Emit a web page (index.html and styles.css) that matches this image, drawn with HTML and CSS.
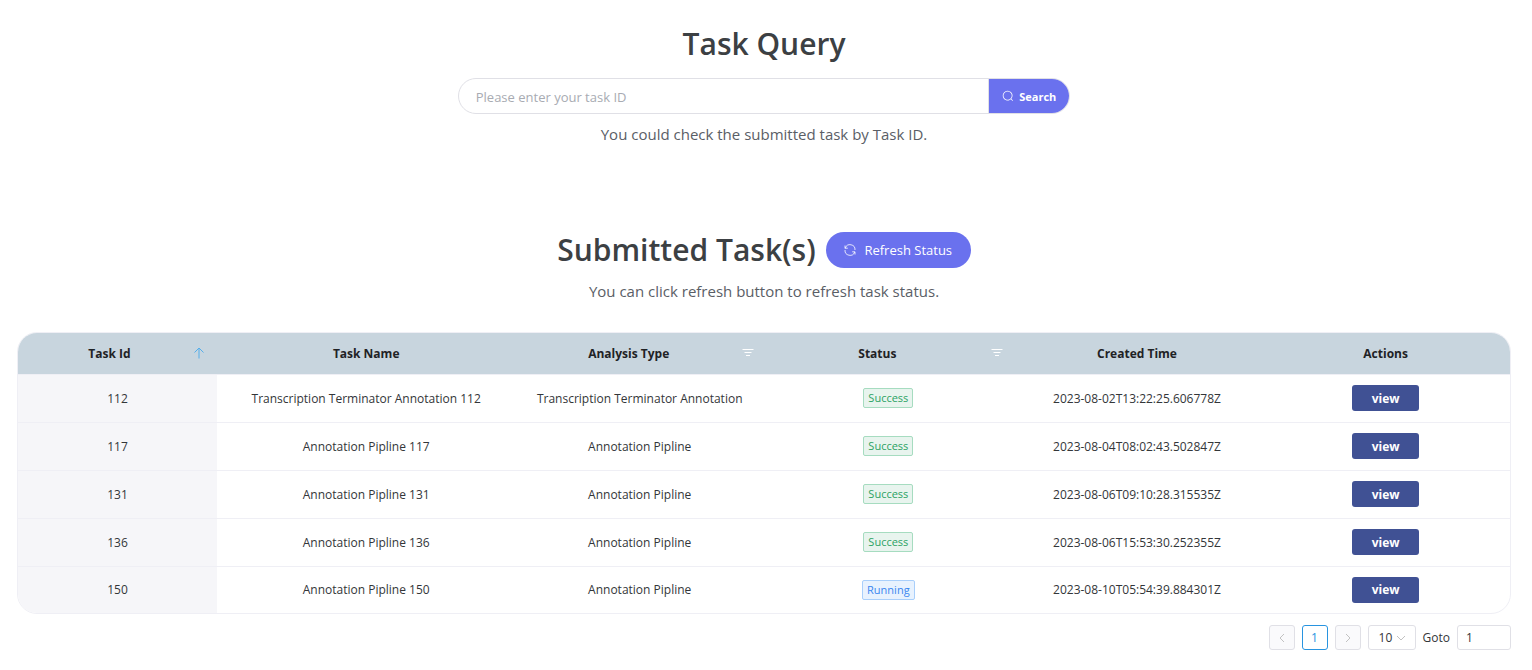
FILE: index.html
```html
<!DOCTYPE html>
<html lang="en">
<head>
<meta charset="utf-8">
<title>Task Query</title>
<link rel="stylesheet" href="styles.css">
</head>
<body>
<main class="page">
  <section class="query">
    <h1 class="title">Task Query</h1>
    <form class="search">
      <input class="search-input" type="text" aria-label="Task ID" placeholder="Please enter your task ID">
      <button class="search-button" type="button">
        <svg class="icon" viewBox="0 0 1024 1024" aria-hidden="true"><path fill="currentColor" d="m795.9 750.7 125 124.9a32 32 0 0 1-45.3 45.3l-125-125a416 416 0 1 1 45.300-45.200zM480 832a352 352 0 1 0 0-704 352 352 0 0 0 0 704z"/></svg>
        <span>Search</span>
      </button>
    </form>
    <p class="hint">You could check the submitted task by Task ID.</p>
  </section>

  <section class="submitted">
    <div class="heading">
      <h2 class="title">Submitted Task(s)</h2>
      <button class="refresh" type="button">
        <svg class="icon refresh-icon" viewBox="0 0 12 12" aria-hidden="true"><path d="M1 4.500V1.500M1 4.200h2.800M1.300 4A5 5 0 0 1 11 6M11 10.500V7.800M11 7.800H8.200M10.700 8A5 5 0 0 1 1 6"/></svg>
        <span>Refresh Status</span>
      </button>
    </div>
    <p class="hint">You can click refresh button to refresh task status.</p>
  </section>

  <div class="table-frame">
    <table class="tasks">
      <colgroup><col class="col-id"><col class="col-name"><col><col><col><col></colgroup>
      <thead>
        <tr>
          <th scope="col"><div class="head head-id"><span class="head-text">Task Id</span><svg class="sort" viewBox="0 0 12 12" aria-hidden="true"><path d="M6 11.500V1M1.500 5.500 6 1l4.500 4.500"/></svg></div></th>
          <th scope="col">Task Name</th>
          <th scope="col"><div class="head"><span class="head-text">Analysis Type</span><svg class="filter" viewBox="0 0 12 12" aria-hidden="true"><path d="M0.500 2.500h11M2.500 5.500h7M4 8.500h4"/></svg></div></th>
          <th scope="col"><div class="head"><span class="head-text">Status</span><svg class="filter" viewBox="0 0 12 12" aria-hidden="true"><path d="M0.500 2.500h11M2.500 5.500h7M4 8.500h4"/></svg></div></th>
          <th scope="col">Created Time</th>
          <th scope="col">Actions</th>
        </tr>
      </thead>
      <tbody>
        <tr><td class="id">112</td><td>Transcription Terminator Annotation 112</td><td>Transcription Terminator Annotation</td><td><span class="tag success">Success</span></td><td>2023-08-02T13:22:25.606778Z</td><td><button class="view" type="button">view</button></td></tr>
        <tr><td class="id">117</td><td>Annotation Pipline 117</td><td>Annotation Pipline</td><td><span class="tag success">Success</span></td><td>2023-08-04T08:02:43.502847Z</td><td><button class="view" type="button">view</button></td></tr>
        <tr><td class="id">131</td><td>Annotation Pipline 131</td><td>Annotation Pipline</td><td><span class="tag success">Success</span></td><td>2023-08-06T09:10:28.315535Z</td><td><button class="view" type="button">view</button></td></tr>
        <tr><td class="id">136</td><td>Annotation Pipline 136</td><td>Annotation Pipline</td><td><span class="tag success">Success</span></td><td>2023-08-06T15:53:30.252355Z</td><td><button class="view" type="button">view</button></td></tr>
        <tr><td class="id">150</td><td>Annotation Pipline 150</td><td>Annotation Pipline</td><td><span class="tag running">Running</span></td><td>2023-08-10T05:54:39.884301Z</td><td><button class="view" type="button">view</button></td></tr>
      </tbody>
    </table>
  </div>

  <nav class="pager" aria-label="Pagination">
    <button class="page-button" type="button" aria-label="Previous page" disabled><svg class="chevron" viewBox="0 0 10 10" aria-hidden="true"><path d="M7 1 3 5l4 4"/></svg></button>
    <button class="page-button current" type="button" aria-current="page">1</button>
    <button class="page-button" type="button" aria-label="Next page" disabled><svg class="chevron" viewBox="0 0 10 10" aria-hidden="true"><path d="m3 1 4 4-4 4"/></svg></button>
    <span class="size">
      <select class="size-select" aria-label="Rows per page"><option>10</option></select>
      <svg class="size-arrow" viewBox="0 0 10 10" aria-hidden="true"><path d="m1 3 4 4 4-4"/></svg>
    </span>
    <label class="goto-label" for="goto">Goto</label>
    <input class="goto" id="goto" type="text" value="1">
  </nav>
</main>
</body>
</html>
```

FILE: styles.css
```css
* {
  box-sizing: border-box;
}

body {
  margin: 0;
  background: #fff;
  color: #333639;
  font-family: "Segoe UI", "Open Sans", "Noto Sans", sans-serif;
  font-size: 12px;
}

button,
input,
select {
  margin: 0;
  font-family: inherit;
}

.page {
  padding: 20px 21px 20px 17px;
}

.query,
.submitted {
  display: flex;
  flex-direction: column;
  align-items: center;
}

.title {
  margin: 0;
  color: #3c4043;
  font-size: 30px;
  font-weight: 600;
  line-height: 48px;
}

.search {
  display: flex;
  width: 41%;
  height: 36px;
  margin-top: 10px;
  overflow: hidden;
  border: 1px solid #e0e0e6;
  border-radius: 18px;
}

.search-input {
  flex: 1;
  min-width: 0;
  padding: 2px 17px 0;
  border: 0;
  outline: 0;
  background: transparent;
  font-size: 13px;
}

.search-input::placeholder {
  color: #a8abb2;
}

.search-button {
  display: flex;
  align-items: center;
  justify-content: center;
  gap: 5px;
  width: 81px;
  padding: 0;
  border: 0;
  border-left: 1px solid #e0e0e6;
  background: #6a71ee;
  color: #fff;
  font-size: 11px;
  font-weight: 700;
}

.icon {
  width: 12px;
  height: 12px;
}

.hint {
  margin: 8px 0 0;
  color: #5a5e66;
  font-size: 15px;
  line-height: 24px;
}

.submitted {
  margin-top: 80px;
}

.submitted .hint {
  margin-top: 5px;
}

.heading {
  display: flex;
  align-items: center;
  gap: 10px;
}

.refresh {
  display: flex;
  align-items: center;
  justify-content: center;
  gap: 8px;
  width: 145px;
  height: 36px;
  padding: 0;
  border: 0;
  border-radius: 18px;
  background: #6a71ee;
  color: #fff;
  font-size: 13px;
}

.refresh-icon {
  fill: none;
  stroke: #fff;
  stroke-width: 0.8;
}

.table-frame {
  margin-top: 29px;
  overflow: hidden;
  border: 1px solid #efeff5;
  border-radius: 20px;
}

.tasks {
  width: 100%;
  table-layout: fixed;
  border-collapse: collapse;
}

.col-id {
  width: 199px;
}

.col-name {
  width: 20%;
}

.tasks th {
  height: 41px;
  padding: 0;
  border-bottom: 1px solid #efeff5;
  background: #c8d5de;
  color: #1f2225;
  font-size: 12px;
  font-weight: 700;
}

.tasks td {
  height: 48px;
  padding: 0;
  border-bottom: 1px solid #efeff5;
  text-align: center;
}

.tasks tbody tr:last-child td {
  height: 47px;
  border-bottom: 0;
}

.tasks .id {
  background: #f6f6f9;
}

.head {
  display: flex;
  align-items: center;
  padding-right: 10px;
}

.head-id {
  padding: 0 12px 0 8px;
}

.head-text {
  flex: 1;
}

.sort,
.filter {
  width: 12px;
  height: 12px;
  fill: none;
  stroke: #fff;
}

.sort {
  stroke: #55aeea;
}

.tag {
  display: inline-block;
  padding: 0 4px;
  border: 1px solid;
  border-radius: 2px;
  font-size: 11px;
  line-height: 18px;
}

.success {
  border-color: #a6dcc0;
  background: #e8f4ee;
  color: #2ba263;
}

.running {
  border-color: #a9cffb;
  background: #e8f2fe;
  color: #3a86f0;
}

.view {
  width: 67px;
  height: 26px;
  padding: 0;
  border: 0;
  border-radius: 3px;
  background: #405194;
  color: #fff;
  font-size: 12px;
  font-weight: 700;
}

.pager {
  display: flex;
  align-items: center;
  justify-content: flex-end;
  gap: 7px;
  margin-top: 11px;
}

.page-button {
  display: flex;
  align-items: center;
  justify-content: center;
  width: 26px;
  height: 25px;
  padding: 0;
  border: 1px solid #e0e0e6;
  border-radius: 3px;
  background: #fafafc;
}

.current {
  border-color: #2894e0;
  background: #fff;
  color: #2894e0;
  font-size: 12px;
}

.chevron,
.size-arrow {
  width: 10px;
  height: 10px;
  fill: none;
  stroke: #c2c2c2;
}

.size {
  position: relative;
  width: 48px;
  height: 25px;
}

.size-select {
  appearance: none;
  width: 100%;
  height: 100%;
  padding: 0 10px;
  border: 1px solid #e0e0e6;
  border-radius: 3px;
  background: #fff;
  color: #333639;
  font-size: 12px;
}

.size-arrow {
  position: absolute;
  top: 8px;
  right: 10px;
  pointer-events: none;
}

.goto-label {
  font-size: 12px;
}

.goto {
  width: 54px;
  height: 25px;
  padding: 0 8px;
  border: 1px solid #e0e0e6;
  border-radius: 3px;
  color: #333639;
  font-size: 12px;
}
```
